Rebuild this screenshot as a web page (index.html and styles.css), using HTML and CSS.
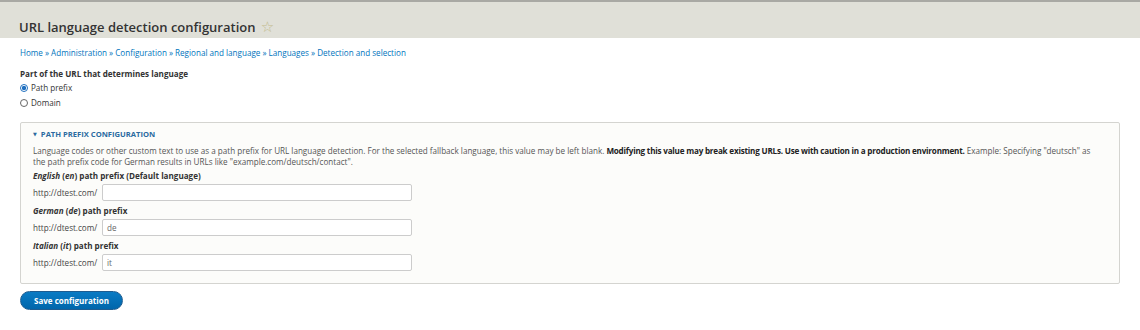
FILE: index.html
```html
<!DOCTYPE html>
<html>
<head>
<meta charset="utf-8">
<link rel="stylesheet" href="styles.css">
</head>
<body>
<header class="page-head">
  <h1 class="title">URL language detection configuration <span class="star">☆</span></h1>
</header>
<main class="content">
  <nav class="breadcrumb">
    <a href="#">Home</a> » <a href="#">Administration</a> » <a href="#">Configuration</a> » <a href="#">Regional and language</a> » <a href="#">Languages</a> » <a href="#">Detection and selection</a>
  </nav>
  <div class="radios">
    <div class="radios-label">Part of the URL that determines language</div>
    <label class="radio"><span class="dot checked"></span>Path prefix</label>
    <label class="radio"><span class="dot"></span>Domain</label>
  </div>
  <section class="fieldset">
    <div class="legend"><span class="tri">▼</span>PATH PREFIX CONFIGURATION</div>
    <p class="desc">Language codes or other custom text to use as a path prefix for URL language detection. For the selected fallback language, this value may be left blank. <strong>Modifying this value may break existing URLs. Use with caution in a production environment.</strong> Example: Specifying "deutsch" as the path prefix code for German results in URLs like "example.com/deutsch/contact".</p>
    <div class="item">
      <div class="label"><em>English</em> (<em>en</em>) path prefix (Default language)</div>
      <div class="row"><span class="prefix">http://dtest.com/</span><span class="input"></span></div>
    </div>
    <div class="item">
      <div class="label"><em>German</em> (<em>de</em>) path prefix</div>
      <div class="row"><span class="prefix">http://dtest.com/</span><span class="input">de</span></div>
    </div>
    <div class="item">
      <div class="label"><em>Italian</em> (<em>it</em>) path prefix</div>
      <div class="row"><span class="prefix">http://dtest.com/</span><span class="input">it</span></div>
    </div>
  </section>
  <button class="btn">Save configuration</button>
</main>
</body>
</html>
```
FILE: styles.css
```css
html, body { margin: 0; padding: 0; background: #fff; }
body { font-family: "Open Sans", "DejaVu Sans", sans-serif; color: #333; font-size: 8.1px; }
.page-head {
  background: #e0e0d8;
  border-top: 2px solid #a9a9a4;
  height: 36px;
  box-sizing: content-box;
  padding: 0 19px;
  display: flex;
  align-items: center;
}
.title { margin: 0; font-size: 13px; font-weight: 600; color: #333; padding-top: 12px; }
.star { font-weight: 400; color: #c2bb8c; font-size: 15px; margin-left: 2px; }
.content { padding: 0 20px 0 20px; }
.breadcrumb { margin-top: 10px; height: 10px; line-height: 10px; color: #0074bd; }
.breadcrumb a { color: #0074bd; text-decoration: none; }
.radios { margin-top: 11px; }
.radios-label { font-weight: 700; line-height: 10px; color: #333; }
.radio { display: flex; align-items: center; line-height: 10px; margin-top: 4px; color: #333; }
.radio + .radio { margin-top: 5px; }
.dot { width: 6px; height: 6px; border: 1px solid #666; border-radius: 50%; margin-right: 3px; box-sizing: content-box; display: inline-block; background: #fff; }
.dot.checked { border-color: #1f6fbf; background: radial-gradient(circle, #1f6fbf 0 2px, #fff 2.3px); }
.fieldset {
  margin-top: 14px;
  border: 1px solid #d4d4d0;
  border-radius: 2px;
  background: #fcfcfa;
  padding: 6px 12px 13px 12px;
  height: 141px;
}
.legend { font-weight: 700; color: #2a6aa0; line-height: 10px; font-size: 7.6px; }
.tri { font-size: 5px; margin-right: 4px; display: inline-block; vertical-align: 1px; }
.desc { margin: 6px 0 0 0; line-height: 11px; color: #555; font-size: 8.1px; max-width: 1068px; }
.desc strong { color: #222; letter-spacing: -0.2px; }
.item { margin-top: 4px; }
.item + .item { margin-top: 5px; }
.label { font-weight: 700; line-height: 10px; color: #333; }
.row { display: flex; align-items: center; margin-top: 3px; }
.prefix { width: 69px; color: #444; }
.input {
  width: 300px; height: 15px; border: 1px solid #ccc; border-radius: 2px; background: #fff;
  padding: 0 4px; line-height: 15px; color: #666;
}
.btn {
  margin-top: 7px;
  font-family: "Open Sans", "DejaVu Sans", sans-serif;
  font-size: 8px; font-weight: 700; color: #fff;
  background: linear-gradient(#0a7bc4, #0066ab);
  border: 1px solid #1e5c90;
  border-radius: 10px;
  width: 103px; height: 19px;
  padding: 0;
}
```
